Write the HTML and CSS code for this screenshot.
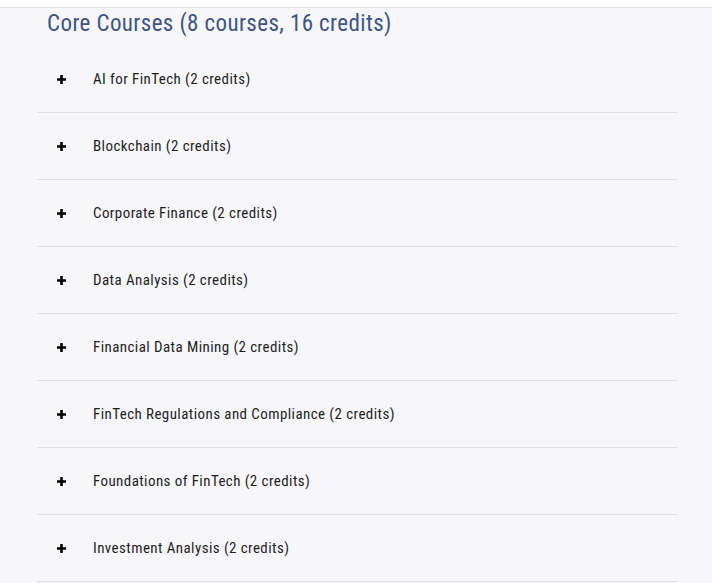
FILE: index.html
```html
<!DOCTYPE html>
<html>
<head>
<meta charset="utf-8">
<link rel="stylesheet" href="styles.css">
</head>
<body>
<div class="topbar"></div>
<main class="panel">
  <h2 class="title">Core Courses (8 courses, 16 credits)</h2>
  <ul class="list">
    <li class="row"><svg class="plus" viewBox="0 0 9 9"><path d="M4.5 0V9M0 4.5H9"/></svg><span class="name">AI for FinTech (2 credits)</span></li>
    <li class="row"><svg class="plus" viewBox="0 0 9 9"><path d="M4.5 0V9M0 4.5H9"/></svg><span class="name">Blockchain (2 credits)</span></li>
    <li class="row"><svg class="plus" viewBox="0 0 9 9"><path d="M4.5 0V9M0 4.5H9"/></svg><span class="name">Corporate Finance (2 credits)</span></li>
    <li class="row"><svg class="plus" viewBox="0 0 9 9"><path d="M4.5 0V9M0 4.5H9"/></svg><span class="name">Data Analysis (2 credits)</span></li>
    <li class="row"><svg class="plus" viewBox="0 0 9 9"><path d="M4.5 0V9M0 4.5H9"/></svg><span class="name">Financial Data Mining (2 credits)</span></li>
    <li class="row"><svg class="plus" viewBox="0 0 9 9"><path d="M4.5 0V9M0 4.5H9"/></svg><span class="name">FinTech Regulations and Compliance (2 credits)</span></li>
    <li class="row"><svg class="plus" viewBox="0 0 9 9"><path d="M4.5 0V9M0 4.5H9"/></svg><span class="name">Foundations of FinTech (2 credits)</span></li>
    <li class="row"><svg class="plus" viewBox="0 0 9 9"><path d="M4.5 0V9M0 4.5H9"/></svg><span class="name">Investment Analysis (2 credits)</span></li>
  </ul>
</main>
</body>
</html>
```

FILE: styles.css
```css
html, body {
  margin: 0;
  padding: 0;
  background: #f7f7f9;
  font-family: Roboto, "Liberation Sans", sans-serif;
}
.topbar {
  height: 7px;
  background: #ffffff;
  border-bottom: 1px solid #e2e2e6;
}
.panel {
  padding: 0 35px 0 37px;
}
.title {
  margin: 0;
  padding: 2px 0 0 10px;
  height: 38px;
  box-sizing: border-box;
  font-size: 23px;
  font-stretch: condensed;
  letter-spacing: 0.4px;
  font-weight: 400;
  color: #3c5487;
  line-height: 27px;
}
.list {
  list-style: none;
  margin: 0;
  padding: 0;
}
.row {
  display: flex;
  align-items: center;
  height: 66px;
  border-bottom: 1px solid #e1e1e5;
  font-size: 15px;
  font-stretch: condensed;
  letter-spacing: 0.42px;
  color: #1e1e1e;
}
.plus {
  width: 9px;
  height: 9px;
  margin: 0 27px 0 20px;
  stroke: #000;
  stroke-width: 2.6;
  fill: none;
}
```
